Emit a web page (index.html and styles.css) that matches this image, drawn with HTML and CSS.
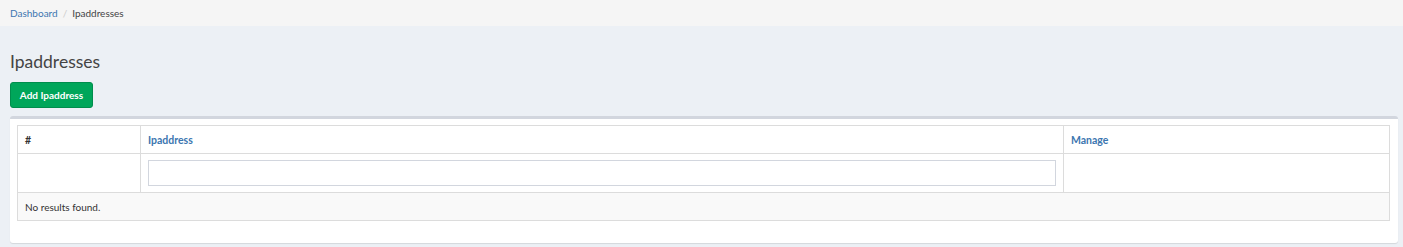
FILE: index.html
```html
<!DOCTYPE html>
<html>
<head>
<meta charset="utf-8">
<link rel="stylesheet" href="styles.css">
</head>
<body>
<div class="crumbs">
  <a href="#" class="crumb-link">Dashboard</a><span class="sep">/</span><span class="crumb-current">Ipaddresses</span>
</div>
<div class="content">
  <h1 class="title">Ipaddresses</h1>
  <a href="#" class="btn-add">Add Ipaddress</a>
  <div class="box">
    <table class="grid">
      <thead>
        <tr class="head-row">
          <th class="col-num">#</th>
          <th class="col-ip"><a href="#">Ipaddress</a></th>
          <th class="col-manage"><a href="#">Manage</a></th>
        </tr>
        <tr class="filter-row">
          <td></td>
          <td><input type="text" class="filter-input"></td>
          <td></td>
        </tr>
      </thead>
      <tbody>
        <tr class="empty-row">
          <td colspan="3">No results found.</td>
        </tr>
      </tbody>
    </table>
  </div>
</div>
</body>
</html>
```
FILE: styles.css
```css
html, body {
  margin: 0;
  padding: 0;
}
body {
  background: #ecf0f5;
  font-family: "Lato", "Open Sans", sans-serif;
  color: #333;
  height: 247px;
  overflow: hidden;
}
a { text-decoration: none; }

.crumbs {
  height: 26px;
  line-height: 26px;
  background: #f5f5f5;
  padding-left: 10px;
  font-size: 10px;
  color: #444;
}
.crumb-link { color: #3c76b0; }
.sep {
  color: #ccc;
  padding: 0 5px;
}

.content {
  padding: 0 5px 0 10px;
}
.title {
  margin: 0;
  padding-top: 25px;
  font-size: 17.5px;
  font-weight: normal;
  line-height: 22px;
  color: #444;
  height: 31px;
}
.btn-add {
  display: inline-block;
  box-sizing: border-box;
  width: 83px;
  height: 26px;
  line-height: 24px;
  text-align: center;
  background: #00a65a;
  border: 1px solid #008d4c;
  border-radius: 3px;
  color: #fff;
  font-size: 10px;
  font-weight: bold;
  vertical-align: top;
}
.box {
  margin-top: 8px;
  background: #fff;
  border-top: 3px solid #d2d6de;
  border-radius: 3px;
  box-shadow: 0 1px 1px rgba(0,0,0,0.1);
  padding: 6px 8px 22px 7px;
}
.grid {
  width: 100%;
  border-collapse: collapse;
  font-size: 10px;
}
.grid th, .grid td {
  border: 1px solid #dcdcdc;
  text-align: left;
  padding: 0 7px;
}
.head-row th {
  height: 27px;
  font-weight: bold;
  font-size: 10.5px;
  color: #333;
}
.head-row th a { color: #3c76b0; }
.col-num { width: 108px; }
.col-ip { width: 908px; }
.filter-row td {
  height: 38px;
}
.filter-input {
  display: block;
  box-sizing: border-box;
  width: 100%;
  height: 26px;
  border: 1px solid #d2d6de;
  margin: 0;
  padding: 0 6px;
}
.empty-row td {
  height: 27px;
  background: #f9f9f9;
  color: #333;
}
```
